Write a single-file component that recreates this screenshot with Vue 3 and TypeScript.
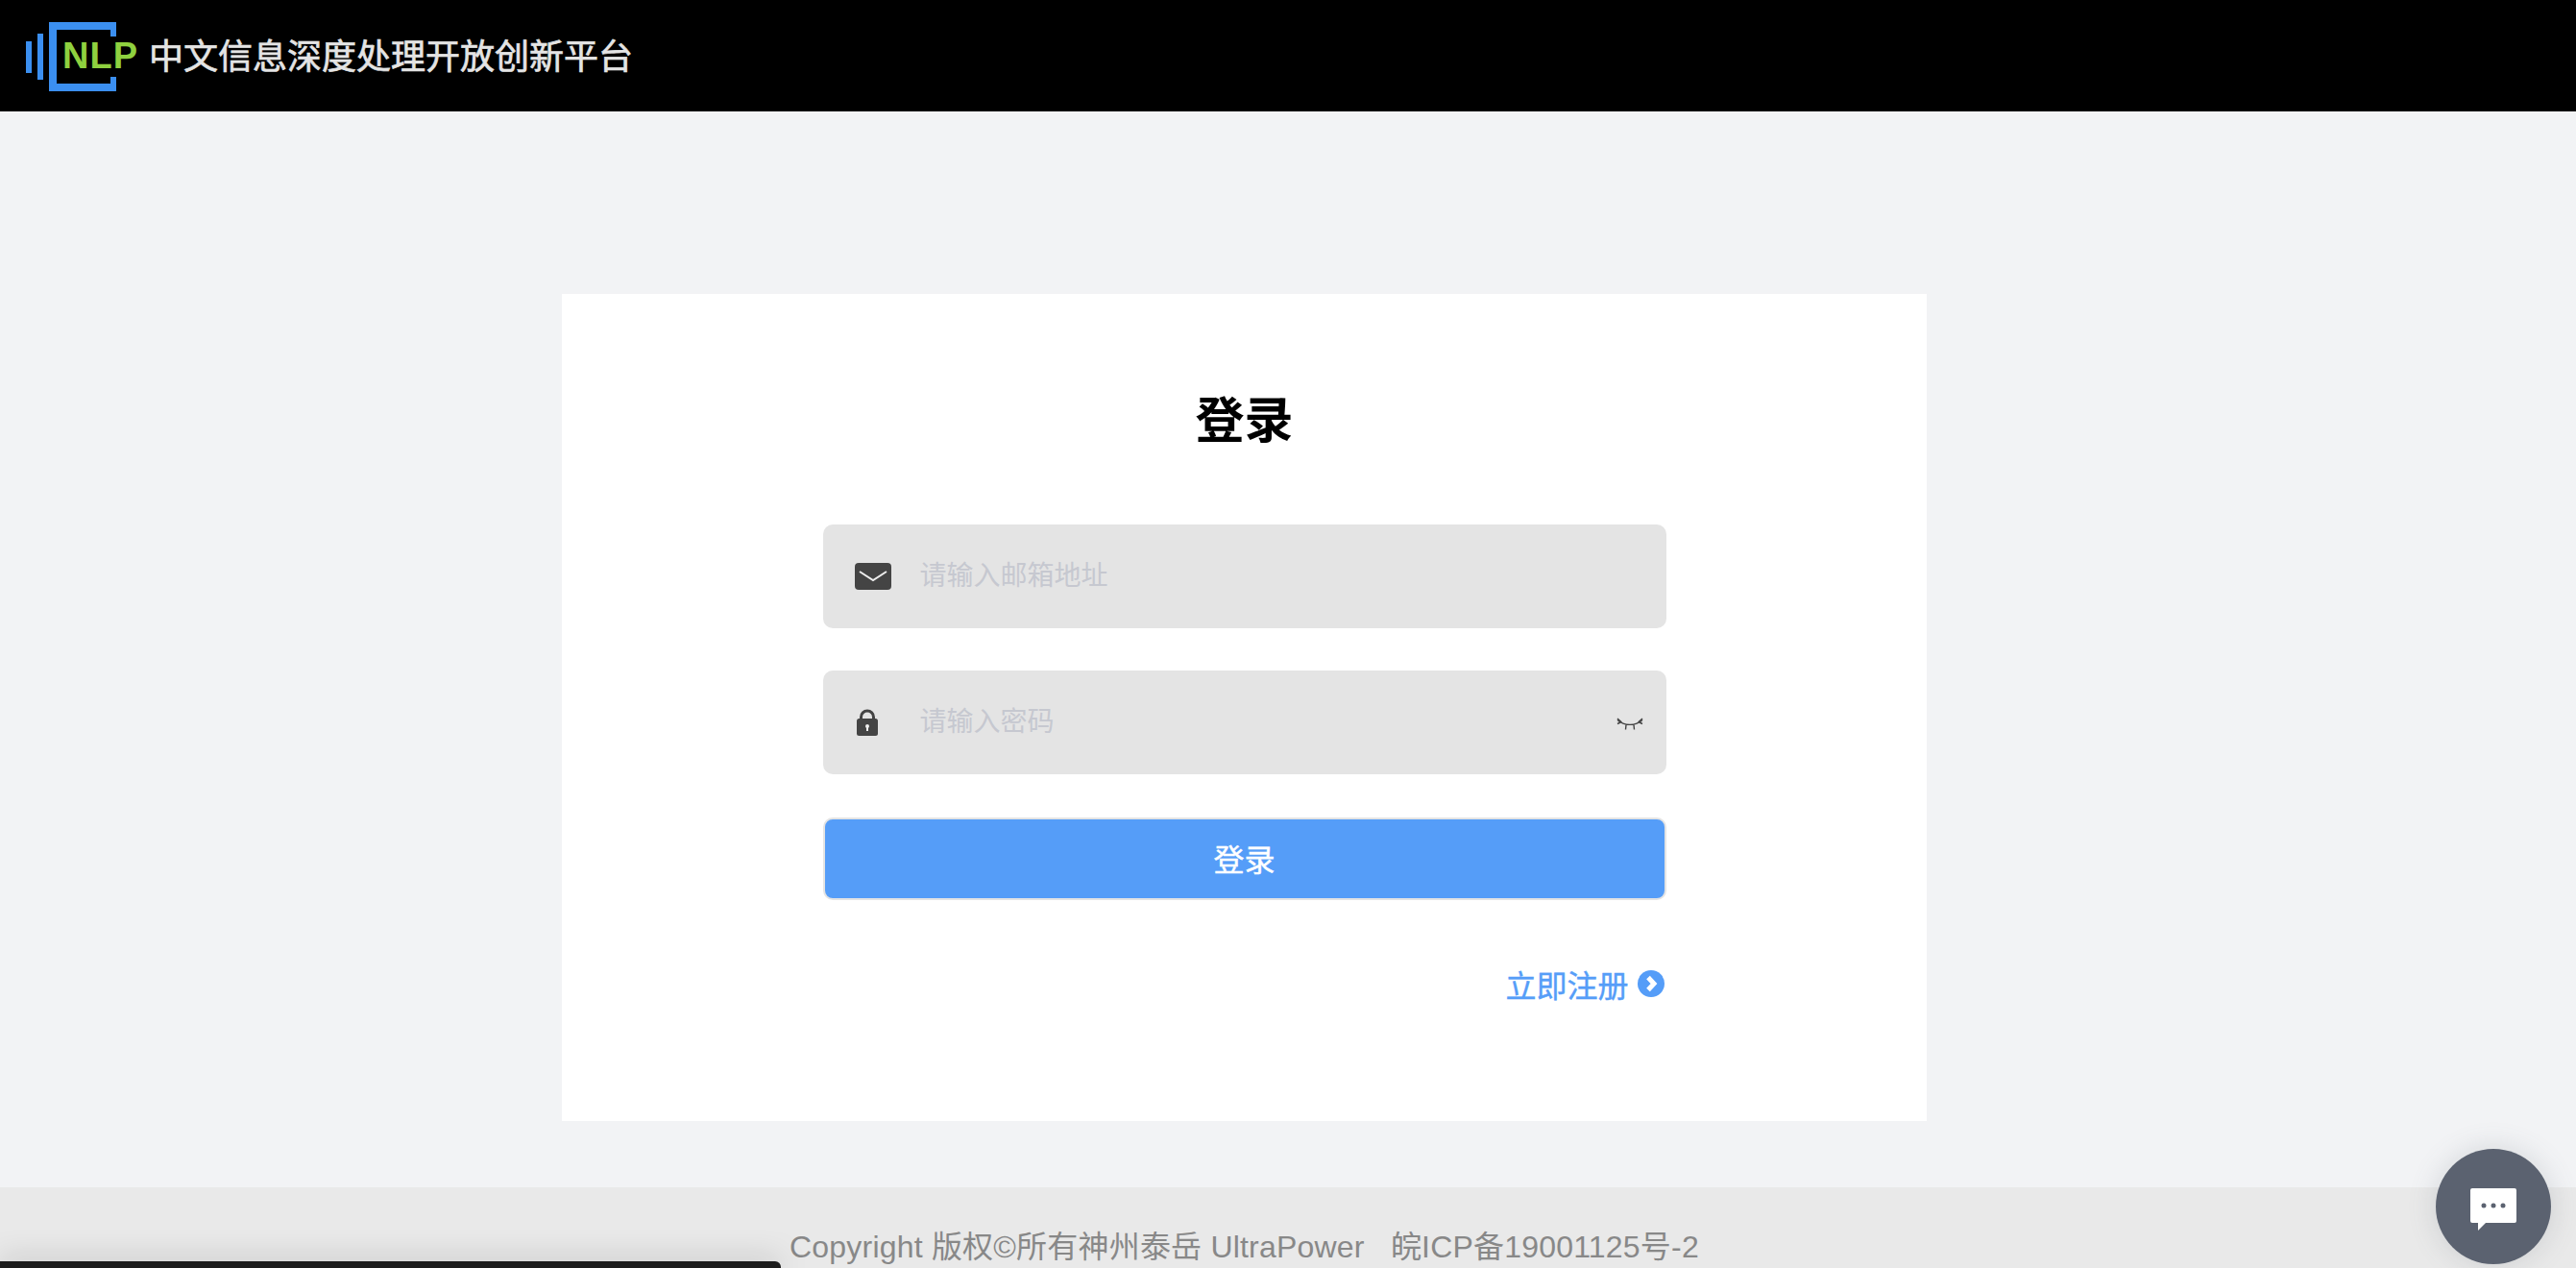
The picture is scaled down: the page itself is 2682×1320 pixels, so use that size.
<template>
  <div class="page">
    <header class="topbar">
      <div class="logo">
        <svg class="logo-mark" width="94" height="74" viewBox="0 0 94 74">
          <rect x="0" y="20" width="6" height="33" fill="#3b8ff0" />
          <rect x="12" y="12" width="6" height="48" fill="#3b8ff0" />
          <path d="M92 15V4H28V68H92V57" fill="none" stroke="#3b8ff0" stroke-width="8" />
        </svg>
        <span class="logo-nlp">NLP</span>
        <span class="logo-title">中文信息深度处理开放创新平台</span>
      </div>
    </header>

    <main class="main">
      <section class="card">
        <h1 class="title">登录</h1>
        <form class="form" @submit.prevent>
          <label class="field">
            <svg class="field-icon" width="38" height="28" viewBox="0 0 38 28">
              <rect width="38" height="28" rx="4" fill="#444" />
              <path d="M5 9L19 18L33 9" fill="none" stroke="#eee" stroke-width="2" />
            </svg>
            <input type="text" placeholder="请输入邮箱地址" />
          </label>
          <label class="field">
            <svg class="field-icon" width="38" height="28" viewBox="0 0 38 28">
              <path d="M6.5 12V8.5a6.5 6.5 0 0 1 13 0V12" fill="none" stroke="#444" stroke-width="3" />
              <rect x="2" y="10" width="22" height="18" rx="2.5" fill="#444" />
              <circle cx="13" cy="18" r="2" fill="#eee" />
              <rect x="12" y="18" width="2" height="5" fill="#eee" />
            </svg>
            <input type="password" placeholder="请输入密码" />
            <svg class="eye" width="28" height="14" viewBox="0 0 28 14">
              <path
                d="M1 2.5C8 9 20 9 27 2.5M1 1L5.5 5M27 1L22.5 5M1 6.5L5 4.5M27 6.5L23 4.5M10 7.5L9.5 12.5M18 7.5L18.5 12.5"
                fill="none"
                stroke="#444"
                stroke-width="1.4"
              />
            </svg>
          </label>
          <button class="submit" type="submit">登录</button>
          <a class="register">
            立即注册
            <svg width="28" height="28" viewBox="0 0 28 28">
              <circle cx="14" cy="14" r="14" fill="#559df8" />
              <path d="M11 7.5L17 14L11 20.5" fill="none" stroke="#fff" stroke-width="5" />
            </svg>
          </a>
        </form>
      </section>
    </main>

    <footer class="footer">Copyright 版权©所有神州泰岳 UltraPower&nbsp;&nbsp;&nbsp;皖ICP备19001125号-2</footer>

    <div class="download-bar"></div>
    <button class="chat" type="button" aria-label="chat">
      <svg width="48" height="44" viewBox="0 0 48 44">
        <path d="M2 0H46a2 2 0 0 1 2 2V34a2 2 0 0 1-2 2H16L8 44V36H2a2 2 0 0 1-2-2V2a2 2 0 0 1 2-2Z" fill="#fff" />
        <circle cx="14" cy="18" r="2.5" fill="#5b6270" />
        <circle cx="24" cy="18" r="2.5" fill="#5b6270" />
        <circle cx="34" cy="18" r="2.5" fill="#5b6270" />
      </svg>
    </button>
  </div>
</template>

<script setup lang="ts">
</script>

<style>
html,
body {
  margin: 0;
  overflow: hidden;
  background: #f2f3f5;
}
</style>

<style scoped>
.page {
  height: 1320px;
  overflow: hidden;
  display: flex;
  flex-direction: column;
  font-family: "Noto Sans CJK SC", sans-serif;
  background: #f2f3f5;
}

.topbar {
  flex: none;
  height: 116px;
  background: #000;
  display: flex;
  align-items: center;
  padding-left: 27px;
}

.logo {
  position: relative;
  display: flex;
  align-items: center;
}

.logo-mark {
  display: block;
  margin-top: 4px;
}

.logo-nlp {
  position: absolute;
  left: 38px;
  top: 16px;
  font: 700 38px/46px "Liberation Sans", sans-serif;
  letter-spacing: 1px;
  color: #8fd13f;
}

.logo-title {
  margin: 0 0 4px 34px;
  font-size: 36px;
  line-height: 44px;
  color: #e4e4e4;
  -webkit-text-stroke: 0.7px #e4e4e4;
  white-space: nowrap;
}

.main {
  flex: none;
  height: 1120px;
  box-sizing: border-box;
  padding: 190px 0 0 585px;
}

.card {
  width: 1421px;
  height: 861px;
  box-sizing: border-box;
  padding-top: 98px;
  background: #fff;
}

.title {
  margin: 0;
  text-align: center;
  font-size: 51px;
  line-height: 60px;
  font-weight: 700;
  color: #000;
}

.form {
  width: 878px;
  margin: 82px auto 0;
  display: flex;
  flex-direction: column;
}

.field {
  position: relative;
  height: 108px;
  margin-bottom: 44px;
  display: flex;
  align-items: center;
  padding-left: 33px;
  background: #e4e4e4;
  border-radius: 10px;
}

.field-icon {
  flex: none;
}

.field input {
  flex: 1;
  min-width: 0;
  margin: -6px 0 0 30px;
  padding: 0;
  border: 0;
  outline: 0;
  background: transparent;
  font: 28px/40px "Noto Sans CJK SC", sans-serif;
}

.field input::placeholder {
  color: #c6c8d0;
  opacity: 1;
}

.eye {
  flex: none;
  margin: 4px 24px 0 0;
}

.submit {
  height: 86px;
  margin-top: 1px;
  padding: 0 0 3px;
  border: 2px solid #e4e4e4;
  border-radius: 10px;
  background: #559df8;
  color: #fff;
  font: 32px/44px "Noto Sans CJK SC", sans-serif;
  -webkit-text-stroke: 0.4px #fff;
}

.register {
  align-self: flex-end;
  margin: 65px 2px 0 0;
  display: flex;
  align-items: center;
  gap: 9px;
  font-size: 32px;
  line-height: 44px;
  color: #559df8;
  -webkit-text-stroke: 0.4px #559df8;
}

.footer {
  flex: none;
  height: 84px;
  box-sizing: border-box;
  padding: 40px 91px 0 0;
  text-align: center;
  background: #e9e9e9;
  color: #888;
  font: 32px/44px "Liberation Sans", "Noto Sans CJK SC", sans-serif;
  letter-spacing: 0.2px;
  white-space: nowrap;
}

.download-bar {
  position: fixed;
  left: 0;
  bottom: 0;
  width: 813px;
  height: 7px;
  background: #1c1c1c;
  border-top-right-radius: 6px;
  box-shadow: 0 0 30px rgba(0, 0, 0, 0.35);
}

.chat {
  position: fixed;
  left: 2536px;
  top: 1196px;
  width: 120px;
  height: 120px;
  padding: 6px 0 0;
  display: flex;
  align-items: center;
  justify-content: center;
  border: 0;
  border-radius: 50%;
  background: #5b6270;
  box-shadow: 0 0 30px rgba(91, 98, 112, 0.2);
}
</style>
